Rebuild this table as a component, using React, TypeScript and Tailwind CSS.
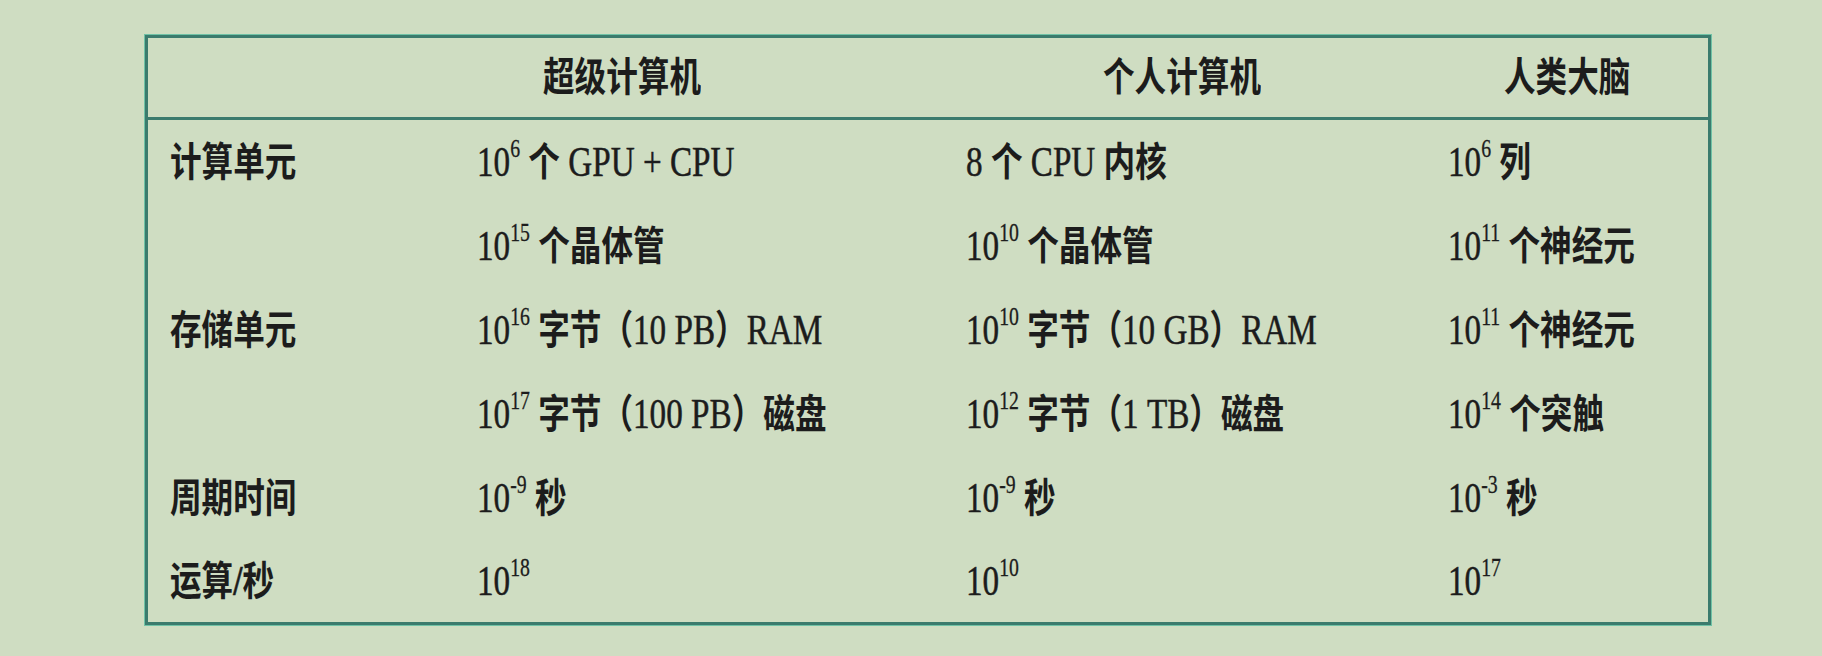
import React from "react"

type Cell = { base?: string; sup?: string; text?: string }

const rows: { label: string; cells: Cell[] }[] = [
  {
    label: "计算单元",
    cells: [
      { base: "10", sup: "6", text: " 个 GPU + CPU" },
      { text: "8 个 CPU 内核" },
      { base: "10", sup: "6", text: " 列" },
    ],
  },
  {
    label: "",
    cells: [
      { base: "10", sup: "15", text: " 个晶体管" },
      { base: "10", sup: "10", text: " 个晶体管" },
      { base: "10", sup: "11", text: " 个神经元" },
    ],
  },
  {
    label: "存储单元",
    cells: [
      { base: "10", sup: "16", text: " 字节（10 PB）RAM" },
      { base: "10", sup: "10", text: " 字节（10 GB）RAM" },
      { base: "10", sup: "11", text: " 个神经元" },
    ],
  },
  {
    label: "",
    cells: [
      { base: "10", sup: "17", text: " 字节（100 PB）磁盘" },
      { base: "10", sup: "12", text: " 字节（1 TB）磁盘" },
      { base: "10", sup: "14", text: " 个突触" },
    ],
  },
  {
    label: "周期时间",
    cells: [
      { base: "10", sup: "-9", text: " 秒" },
      { base: "10", sup: "-9", text: " 秒" },
      { base: "10", sup: "-3", text: " 秒" },
    ],
  },
  {
    label: "运算/秒",
    cells: [
      { base: "10", sup: "18" },
      { base: "10", sup: "10" },
      { base: "10", sup: "17" },
    ],
  },
]

const CJK = /([\u3000-\u303f\u4e00-\u9fff\uff00-\uffef]+)/

// split a string into CJK and latin runs: CJK heavier, latin taller
const Mixed = ({ text }: { text: string }) => {
  const parts = text.split(CJK)
  return (
    <>
      {parts.map((p, i) =>
        CJK.test(p) ? (
          <span key={i} className="font-bold">
            {p}
          </span>
        ) : (
          <span key={i} className="text-[42px] [-webkit-text-stroke:0.5px_#1c1c1c]">
            {p}
          </span>
        )
      )}
    </>
  )
}

const Squeeze = ({ children }: { children: React.ReactNode }) => (
  <span className="block origin-left scale-x-[0.79] whitespace-nowrap">
    {children}
  </span>
)

const CellText = ({ cell }: { cell: Cell }) => (
  <Squeeze>
    {cell.base && (
      <span className="text-[42px] [-webkit-text-stroke:0.5px_#1c1c1c]">{cell.base}</span>
    )}
    {cell.sup && (
      <span className="relative -top-[19px] text-[25px] [-webkit-text-stroke:0.3px_#1c1c1c]">
        {cell.sup}
      </span>
    )}
    {cell.text && <Mixed text={cell.text} />}
  </Squeeze>
)

export default function App() {
  return (
    <div
      className="w-[1822px] h-[656px] bg-[#cfddc2] pt-[35px] pl-[145px] text-[40px] leading-none text-[#1c1c1c]"
      style={{ fontFamily: '"Liberation Serif", "Noto Sans CJK SC", serif' }}
    >
      <div className="w-[1566px] h-[590px] overflow-hidden border-[3px] border-[#3b7b6d] shadow-[0_0_0_1px_#6fc2a6]">
        <div className="grid h-[82px] grid-cols-[307px_489px_482px_1fr] items-center border-b-[3px] border-[#3b7b6d] pl-[22px] font-bold">
          <div />
          <div className="pl-[66px]">
            <Squeeze>超级计算机</Squeeze>
          </div>
          <div className="pl-[137px]">
            <Squeeze>个人计算机</Squeeze>
          </div>
          <div className="pl-[56px]">
            <Squeeze>人类大脑</Squeeze>
          </div>
        </div>
        {rows.map((row, i) => (
          <div
            key={i}
            className={`grid grid-cols-[307px_489px_482px_1fr] items-center pl-[22px] ${
              i === rows.length - 1 ? "h-[81px]" : "h-[84px]"
            }`}
          >
            <div className="font-bold">
              <Squeeze>
                <Mixed text={row.label} />
              </Squeeze>
            </div>
            {row.cells.map((c, j) => (
              <div key={j}>
                <CellText cell={c} />
              </div>
            ))}
          </div>
        ))}
      </div>
    </div>
  )
}
